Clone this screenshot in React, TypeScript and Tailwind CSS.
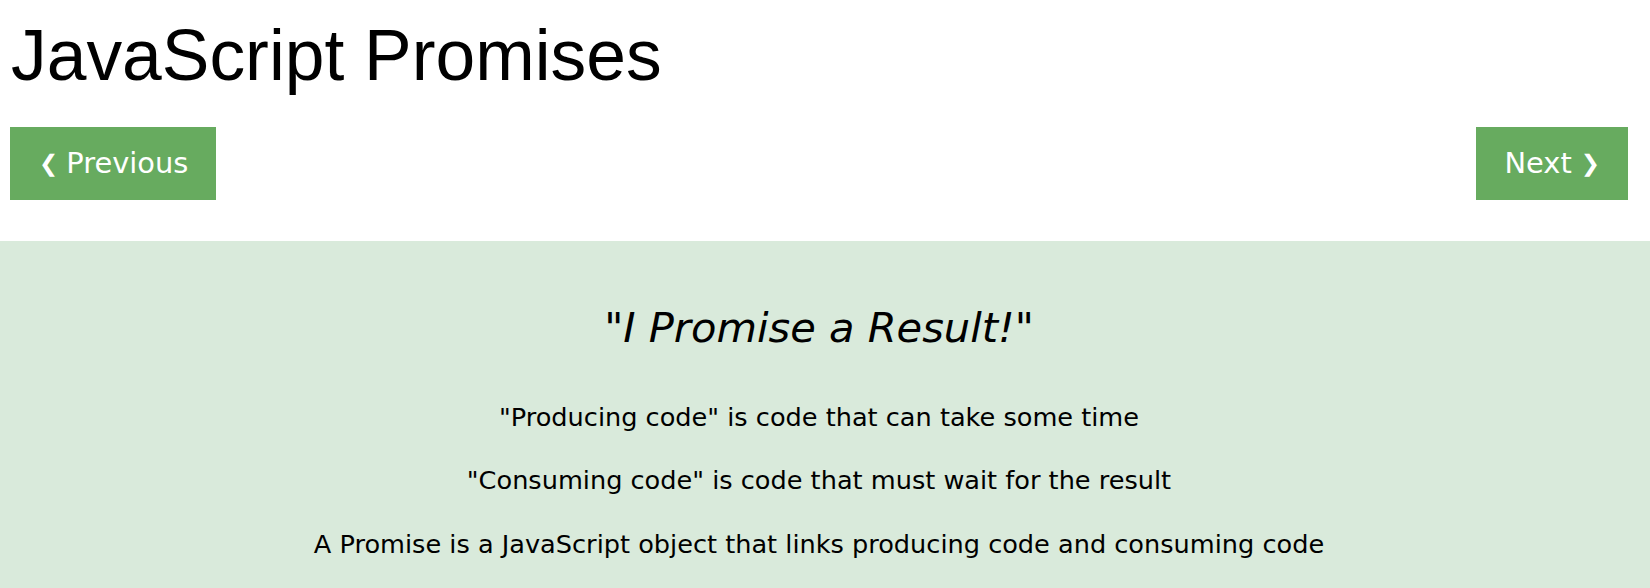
export default function App() {
  return (
    <div className="w-[1650px] h-[588px] overflow-hidden bg-white text-black">
      <h1 className="pl-[11px] pt-[2px] font-['Liberation_Sans',Arial,sans-serif] text-[71.4px] leading-[107px] font-normal">
        JavaScript Promises
      </h1>

      <div className="mt-[18px] flex items-center justify-between pl-[10px] pr-[22px] font-['DejaVu_Sans',Verdana,sans-serif]">
        <button className="flex h-[73px] items-center gap-[8px] bg-[#67ab5f] pl-[29px] pr-[28px] text-[28.9px] leading-[43.35px] text-white">
          <span className="text-[23px] font-bold">❮</span>
          <span>Previous</span>
        </button>
        <button className="flex h-[73px] items-center gap-[9px] bg-[#67ab5f] pl-[28px] pr-[28px] text-[28.9px] leading-[43.35px] text-white">
          <span>Next</span>
          <span className="text-[23px] font-bold">❯</span>
        </button>
      </div>

      <div className="mt-[41px] h-[347px] bg-[#d9eadb] pt-[56px] pr-[12px] text-center font-['DejaVu_Sans',Verdana,sans-serif]">
        <h2 className="text-[41.6px] leading-[61.2px] font-normal italic">"I Promise a Result!"</h2>
        <div className="mt-[40px] flex flex-col gap-[25px] text-[25.6px] leading-[38.25px]">
          <p>"Producing code" is code that can take some time</p>
          <p>"Consuming code" is code that must wait for the result</p>
          <p>A Promise is a JavaScript object that links producing code and consuming code</p>
        </div>
      </div>
    </div>
  );
}
